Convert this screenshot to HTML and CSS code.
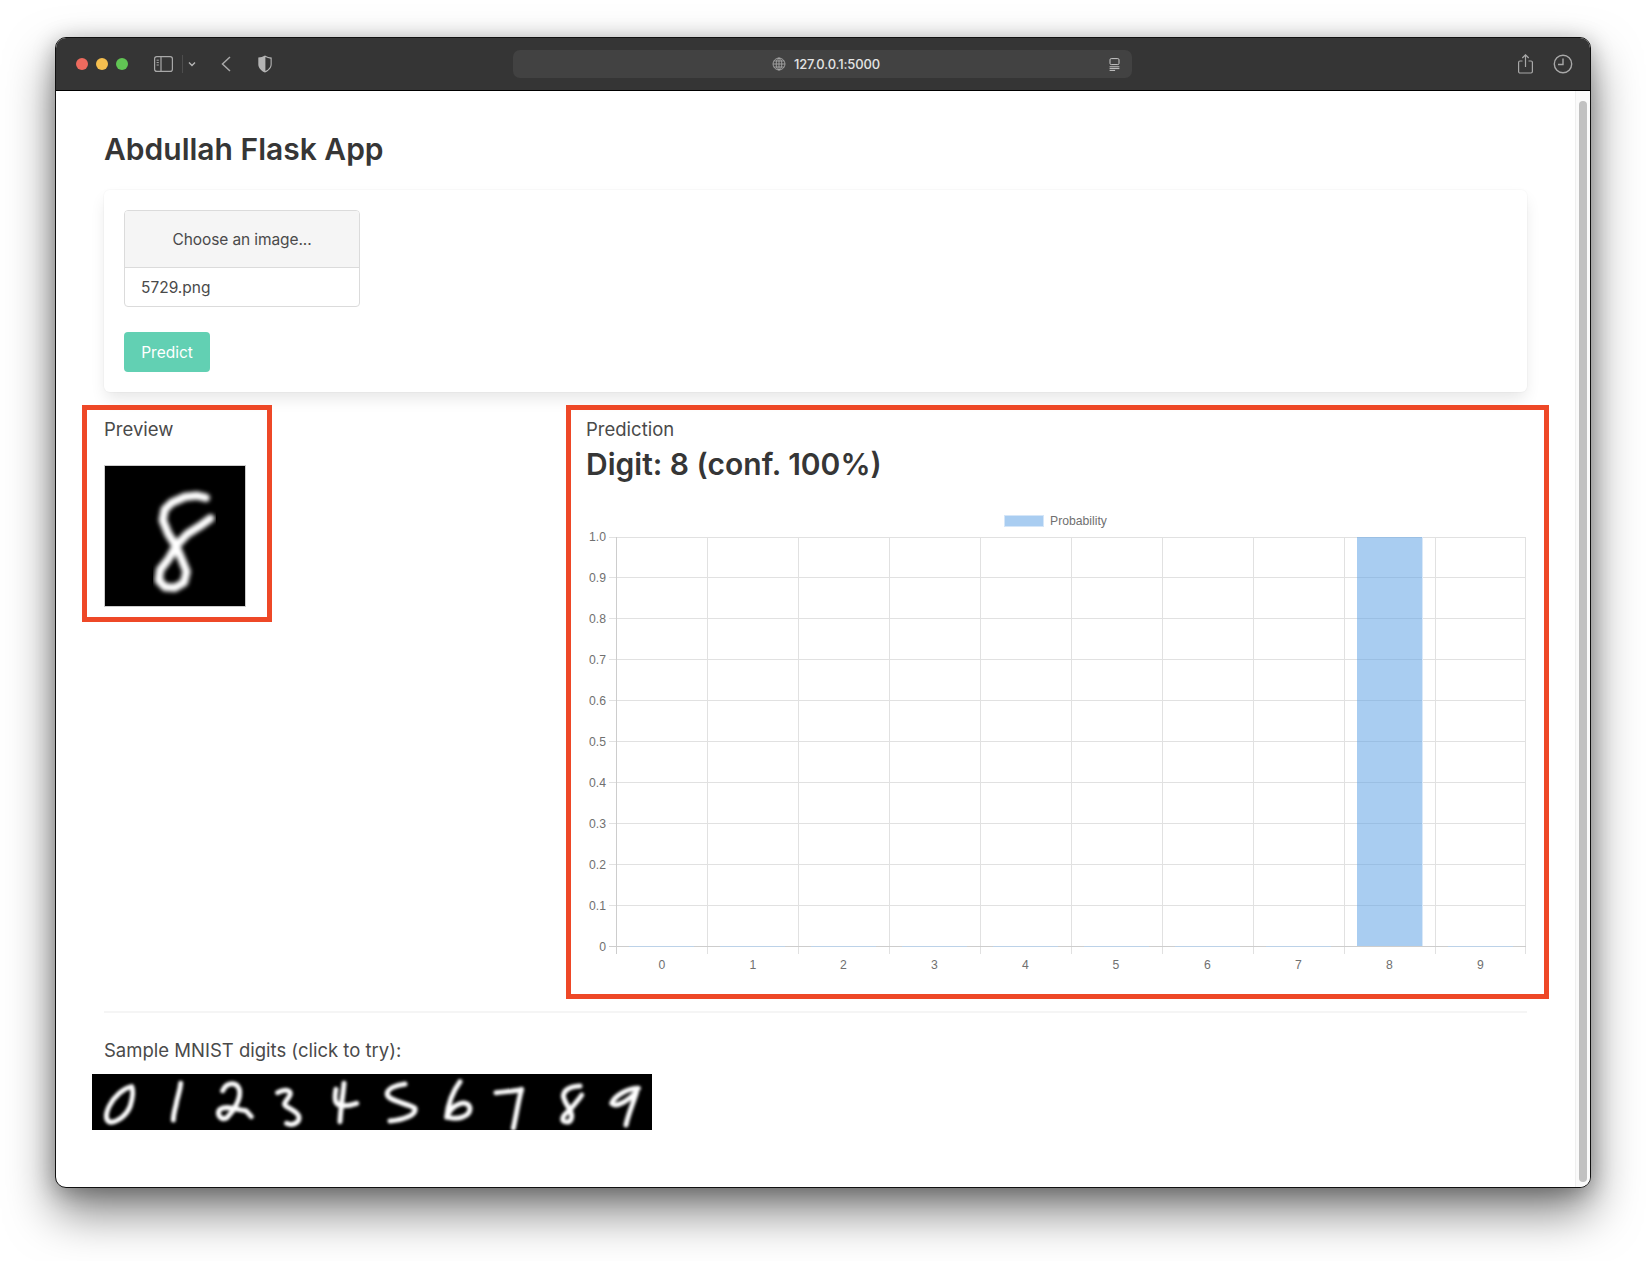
FILE: index.html
```html
<!DOCTYPE html>
<html lang="en">
<head>
<meta charset="utf-8">
<title>Abdullah Flask App</title>
<link rel="stylesheet" href="styles.css">
</head>
<body>
<div class="window">
  <header class="toolbar">
    <div class="lights"><span class="light red"></span><span class="light yellow"></span><span class="light green"></span></div>
    <svg class="ic ic-sidebar" viewBox="0 0 19 16"><rect x=".6" y=".6" width="17.8" height="14.8" rx="2.2"/><path d="M7 .6v14.8"/><path class="thin" d="M2.6 4.2h2.2M2.6 6.6h2.2M2.6 9h2.2"/></svg>
    <span class="sep"></span>
    <svg class="ic ic-chev" viewBox="0 0 8 6"><path d="M1 1.4l3 3 3-3"/></svg>
    <svg class="ic ic-back" viewBox="0 0 10 16"><path d="M9 1L1.5 8 9 15"/></svg>
    <svg class="ic ic-shield" viewBox="0 0 14 18"><path class="solid" d="M7 .5c2 1.200 4.200 1.900 6.700 2.100v6.600c0 3.900-3.300 6.900-6.700 8.300-3.400-1.400-6.700-4.400-6.700-8.300V2.600C2.800 2.400 5 1.700 7 .5z"/><path class="cut" d="M7.400 2.100c1.700.8 3.500 1.400 5.200 1.600v5.500c0 3.100-2.600 5.600-5.200 6.900z"/></svg>
    <div class="address">
      <svg class="ic ic-globe" viewBox="0 0 14 14"><circle cx="7" cy="7" r="6"/><ellipse cx="7" cy="7" rx="2.800" ry="6"/><path d="M7 1v12M1 7h12M1.800 4h10.400M1.800 10h10.400"/></svg>
      <span class="url">127.0.0.1:5000</span>
      <svg class="ic ic-reader" viewBox="0 0 11 13"><rect x="1" y=".6" width="9" height="6" rx="1.200"/><path d="M.6 8.800h9.800M.6 10.600h9.800M.6 12.400h5.500"/></svg>
    </div>
    <svg class="ic ic-share" viewBox="0 0 15 20"><path d="M4.500 7H2a1.400 1.400 0 0 0-1.400 1.400v9.200A1.400 1.400 0 0 0 2 19h11a1.400 1.400 0 0 0 1.400-1.400V8.400A1.400 1.400 0 0 0 13 7h-2.500"/><path d="M7.500 13V1M4.300 4l3.200-3.200L10.700 4"/></svg>
    <svg class="ic ic-clock" viewBox="0 0 20 20"><circle cx="10" cy="10" r="8.700"/><path d="M10 4.500V10.500H5"/></svg>
  </header>

  <div class="viewport">
    <main class="page">
      <h1 class="title">Abdullah Flask App</h1>

      <section class="card">
        <div class="file">
          <div class="file-cta">Choose an image...</div>
          <div class="file-name">5729.png</div>
        </div>
        <button class="predict" type="button">Predict</button>
      </section>

      <div class="results">
        <section class="col col-preview">
          <p class="label">Preview</p>
          <div class="preview-img">
            <svg class="digit-art" viewBox="14 17 422 422">
              <defs><filter id="soft" x="-10%" y="-10%" width="120%" height="120%"><feGaussianBlur stdDeviation="7"/></filter></defs>
              <rect class="art-bg" x="14" y="17" width="422" height="422"/>
              <path class="art-stroke" filter="url(#soft)" d="M318 113L290 106L255 110L215 128L194 148L188 180L205 222L228 258L205 298L180 330L176 362L195 382L225 384L252 368L260 335L245 298L228 258L262 222L300 198L332 175"/>
            </svg>
          </div>
        </section>

        <section class="col col-prediction">
          <p class="label">Prediction</p>
          <h2 class="digit-title">Digit: 8 (conf. 100%)</h2>
          <svg class="chart" viewBox="586 505 944 470">
            <rect class="legend-box" x="1004.500" y="515.500" width="39" height="11"/>
            <text class="legend-text" x="1050" y="525">Probability</text>

            <path class="grid" d="M609 537.500H1526M609 577.500H1526M609 618.500H1526M609 659.500H1526M609 700.500H1526M609 741.500H1526M609 782.500H1526M609 823.500H1526M609 864.500H1526M609 905.500H1526"/>
            <path class="grid" d="M707.500 537V954M798.500 537V954M889.500 537V954M980.500 537V954M1071.500 537V954M1162.500 537V954M1253.500 537V954M1344.500 537V954M1435.500 537V954M1525.500 537V954"/>
            <path class="axis" d="M616.500 537V954M609 946.500H1526"/>

            <rect class="bar" x="1357" y="537" width="65" height="409"/>
            <path class="bar-edge" d="M1422.500 537V946"/>
            <path class="bar-trace" d="M629 946.500H694M720 946.500H785M811 946.500H876M902 946.500H967M993 946.500H1058M1084 946.500H1149M1175 946.500H1240M1266 946.500H1331M1448 946.500H1513"/>

            <g class="tick-y">
              <text x="606" y="541">1.0</text><text x="606" y="582">0.9</text><text x="606" y="623">0.8</text><text x="606" y="664">0.7</text><text x="606" y="705">0.6</text><text x="606" y="746">0.5</text><text x="606" y="787">0.4</text><text x="606" y="828">0.3</text><text x="606" y="869">0.2</text><text x="606" y="910">0.1</text><text x="606" y="951">0</text>
            </g>
            <g class="tick-x">
              <text x="662" y="969">0</text><text x="753" y="969">1</text><text x="843.500" y="969">2</text><text x="934.500" y="969">3</text><text x="1025.500" y="969">4</text><text x="1116" y="969">5</text><text x="1207.500" y="969">6</text><text x="1298.500" y="969">7</text><text x="1389.500" y="969">8</text><text x="1480.500" y="969">9</text>
            </g>
          </svg>
        </section>
      </div>

      <hr class="rule">

      <p class="label sample-label">Sample MNIST digits (click to try):</p>
      <svg class="samples" viewBox="6 42 1680 168">
        <defs><filter id="soft2" x="-5%" y="-20%" width="110%" height="140%"><feGaussianBlur stdDeviation="4"/></filter></defs>
        <rect class="art-bg" x="6" y="42" width="1680" height="168"/>
        <g class="sample-stroke" filter="url(#soft2)">
          <path d="M125 80C100 85 72 110 58 138C46 162 45 182 62 187C85 185 110 165 120 140C128 115 132 95 125 80"/>
          <path d="M272 70C270 95 262 110 258 135C254 150 250 165 250 180"/>
          <path d="M398 92C410 65 440 65 448 88C455 115 430 155 410 174C390 182 378 160 390 148C410 135 440 150 468 152L484 170"/>
          <path d="M563 98C585 85 605 90 600 105C590 125 575 130 590 140C610 150 635 165 625 182C615 195 600 195 590 190"/>
          <path d="M738 88C732 120 735 135 755 137C770 138 785 135 800 130M762 70C760 100 752 140 750 185"/>
          <path d="M945 72C920 75 888 85 892 105C900 125 955 130 975 145C980 165 940 180 900 183"/>
          <path d="M1110 65C1095 85 1075 120 1070 172C1085 130 1135 115 1140 145C1140 170 1105 180 1075 172"/>
          <path d="M1218 98C1240 95 1270 95 1295 88C1285 120 1280 160 1270 205"/>
          <path d="M1470 78C1440 80 1420 90 1420 110C1425 130 1435 140 1440 150C1420 165 1410 180 1425 185C1445 190 1450 170 1440 150C1455 130 1470 115 1475 105"/>
          <path d="M1645 85C1615 85 1575 105 1565 130C1580 145 1615 120 1640 95C1630 130 1615 160 1608 195"/>
        </g>
      </svg>
    </main>
    <div class="scrollbar"><span class="thumb"></span></div>
  </div>
</div>
</body>
</html>
```
FILE: styles.css
```css
* { box-sizing: border-box; }
html, body { margin: 0; height: 100%; }
body {
  background: #fff;
  padding: 37px 55px 0 55px;
  overflow: hidden;
  font-family: "Inter", "Liberation Sans", sans-serif;
  color: #4a4a4a;
}
.window {
  width: 1536px;
  height: 1151px;
  display: flex;
  flex-direction: column;
  border: 1px solid #111;
  border-radius: 11px;
  background: #fff;
  box-shadow: 0 24px 48px rgba(0, 0, 0, .5), 0 4px 22px rgba(0, 0, 0, .28);
  overflow: hidden;
}
.toolbar {
  height: 53px;
  flex: none;
  display: flex;
  align-items: center;
  background: #353535;
  border-bottom: 1px solid #000;
  padding-left: 20px;
}
.lights { display: flex; gap: 8px; }
.light { width: 12px; height: 12px; border-radius: 50%; }
.red { background: #ed6a5e; }
.yellow { background: #f5bf4f; }
.green { background: #61c554; }
.ic { flex: none; fill: none; stroke: #a8a8a8; stroke-width: 1.2; }
.ic-sidebar { width: 19px; height: 16px; margin-left: 26px; }
.ic-sidebar .thin { stroke-width: 1; }
.sep { width: 1px; height: 18px; background: #4d4d4d; margin-left: 9px; }
.ic-chev { width: 8px; height: 6px; margin-left: 5px; stroke-width: 1.4; stroke: #b5b5b5; }
.ic-back { width: 10px; height: 16px; margin-left: 25px; stroke-width: 1.5; }
.ic-shield { width: 14px; height: 18px; margin-left: 27px; }
.ic-shield .solid { fill: #b4b4b4; stroke: none; }
.ic-shield .cut { fill: #353535; stroke: none; }
.address {
  position: relative;
  width: 619px;
  height: 28px;
  margin-left: 241px;
  padding-left: 7px;
  display: flex;
  align-items: center;
  justify-content: center;
  gap: 8px;
  border-radius: 7px;
  background: #424242;
}
.ic-globe { width: 14px; height: 14px; stroke-width: .8; stroke: #b0b0b0; }
.url { font-size: 13px; font-weight: 500; color: #e4e4e4; letter-spacing: -.12px; }
.ic-reader { position: absolute; right: 12px; top: 8px; width: 11px; height: 13px; stroke: #c8c8c8; stroke-width: 1; }
.ic-share { width: 15px; height: 20px; margin-left: 386px; }
.ic-clock { width: 20px; height: 20px; margin-left: 20px; stroke-width: 1.4; }

.viewport { position: relative; flex: 1; min-height: 0; }
.page { padding: 38px 63px 0 48px; }
.title {
  margin: 0 0 21px;
  font-size: 30px;
  line-height: 40px;
  font-weight: 600;
  color: #363636;
}
.card {
  height: 202px;
  padding: 20px;
  border-radius: 6px;
  background: #fff;
  box-shadow: 0 8px 16px -2px rgba(10, 10, 10, .1), 0 0 0 1px rgba(10, 10, 10, .02);
}
.file {
  width: 236px;
  height: 97px;
  border: 1px solid #dbdbdb;
  border-radius: 4px;
  font-size: 15.500px;
  overflow: hidden;
}
.file-cta {
  height: 57px;
  line-height: 57px;
  text-align: center;
  background: #f5f5f5;
  border-bottom: 1px solid #dbdbdb;
  letter-spacing: -.1px;
}
.file-name { height: 38px; line-height: 39px; padding-left: 16px; }
.predict {
  display: block;
  width: 86px;
  height: 40px;
  margin-top: 25px;
  border: 0;
  border-radius: 4px;
  background: #62d0b3;
  color: #fff;
  font: 15.500px "Inter", "Liberation Sans", sans-serif;
}
.results {
  display: flex;
  justify-content: space-between;
  align-items: flex-start;
  margin: 13px -22px 0;
}
.col { border: 5px solid #ee4827; }
.col-preview { width: 190px; height: 217px; padding: 6px 17px 0; }
.col-prediction { width: 983px; height: 594px; padding: 6px 15px 0; }
.label { margin: 0; font-size: 18.500px; line-height: 27px; color: #4a4a4a; }
.preview-img { width: 142px; height: 142px; margin-top: 22px; border: 1px solid #ccc; }
.digit-art { display: block; width: 140px; height: 140px; }
.art-bg { fill: #000; }
.art-stroke { fill: none; stroke: #fff; stroke-width: 25; stroke-linecap: round; stroke-linejoin: round; }
.digit-title {
  margin: 3px 0 0;
  font-size: 30px;
  line-height: 36px;
  font-weight: 600;
  color: #363636;
}
.chart { display: block; width: 944px; height: 470px; margin-top: 23px; }
.grid { fill: none; stroke: #e1e1e1; stroke-width: 1; }
.axis { fill: none; stroke: #cdcdcd; stroke-width: 1; }
.bar { fill: rgba(99, 164, 230, .55); }
.bar-edge { stroke: #d9e8f8; fill: none; }
.bar-trace { stroke: #bcd2e8; fill: none; }
.legend-box { fill: #a9cdf1; stroke: #d5e6f8; stroke-width: 1; }
.legend-text, .tick-y text, .tick-x text {
  font-family: "Liberation Sans", sans-serif;
  font-size: 12.200px;
  fill: #707070;
}
.tick-y text { text-anchor: end; }
.tick-x text { text-anchor: middle; }
.rule { height: 2px; margin: 12px 0 0; border: 0; background: #f5f5f5; }
.sample-label { margin-top: 24px; }
.samples { display: block; width: 560px; height: 56px; margin: 10px 0 0 -12px; }
.sample-stroke path { fill: none; stroke: #fff; stroke-width: 15; stroke-linecap: round; stroke-linejoin: round; }
.scrollbar {
  position: absolute;
  top: 0;
  right: 0;
  bottom: 0;
  width: 15px;
  padding: 10px 3px 5px 3px;
  background: #fafafa;
  border-left: 1px solid #efefef;
}
.thumb { display: block; height: 100%; border-radius: 4px; background: #c1c1c1; }
```
